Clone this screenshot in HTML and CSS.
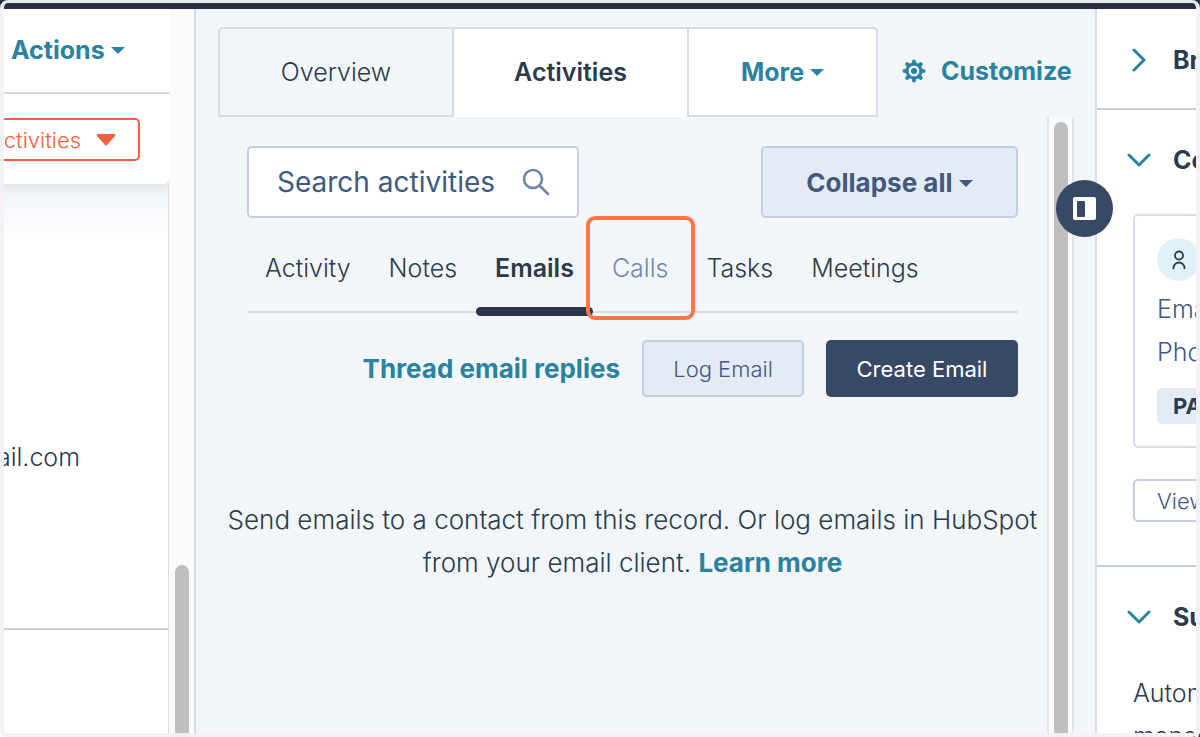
FILE: index.html
```html
<!DOCTYPE html>
<html lang="en">
<head>
<meta charset="utf-8">
<meta name="viewport" content="width=device-width, initial-scale=1">
<title>Contact record</title>
<link rel="stylesheet" href="styles.css">
</head>
<body>
<div class="page">
  <header class="topbar"></header>
  <div class="workspace">
    <aside class="left">
      <div class="left-body">
        <div class="left-head">
          <div class="actions-row"><button class="link-btn" type="button">Actions <span class="caret"></span></button></div>
          <div class="filter-row"><button class="filter-btn" type="button">activities
            <svg width="22" height="14" viewBox="0 0 22 14"><path d="M3 1h16q2 0 1 2l-8 9q-1 1-2 0L2 3q-1-2 1-2z" fill="#f2603f"/></svg></button></div>
        </div>
        <div class="contact"><span>gmail.com</span></div>
        <div class="left-rest"></div>
      </div>
      <div class="track left-track"><div class="thumb"></div></div>
    </aside>

    <main class="middle">
      <div class="tabs-row">
        <nav class="tabs">
          <button class="tab tab-muted" type="button">Overview</button>
          <button class="tab tab-active" type="button">Activities</button>
          <button class="tab tab-more" type="button">More <span class="caret"></span></button>
        </nav>
        <button class="link-btn customize" type="button">
          <svg width="24" height="24" viewBox="0 0 24 24" fill="none" stroke="#2a82a0"><circle cx="12" cy="12" r="7" stroke-width="3"/><circle cx="12" cy="12" r="3" fill="#2a82a0" stroke="none"/><path d="M12 2.500v2M12 19.500v2M2.500 12h2M19.500 12h2M5.200 5.200l1.500 1.500M17.300 17.300l1.500 1.500M5.200 18.800l1.500-1.500M17.300 6.700l1.500-1.500" stroke-width="4" stroke-linecap="round"/></svg>
          Customize</button>
      </div>
      <div class="scroller">
        <div class="content">
          <div class="tools">
            <label class="search">
              <input type="text" placeholder="Search activities" aria-label="Search activities">
              <svg width="28" height="28" viewBox="0 0 28 28" fill="none" stroke="#6a85ad" stroke-width="2.500" stroke-linecap="round"><circle cx="11" cy="11" r="9"/><path d="M18 18l8 8"/></svg>
            </label>
            <button class="btn btn-collapse" type="button">Collapse all <span class="caret"></span></button>
          </div>
          <nav class="subtabs">
            <a class="subtab" href="#">Activity</a>
            <a class="subtab" href="#">Notes</a>
            <a class="subtab subtab-current" href="#">Emails</a>
            <a class="subtab subtab-marked" href="#">Calls</a>
            <a class="subtab" href="#">Tasks</a>
            <a class="subtab" href="#">Meetings</a>
          </nav>
          <div class="mail-actions">
            <a class="link" href="#">Thread email replies</a>
            <button class="btn btn-log" type="button">Log Email</button>
            <button class="btn btn-create" type="button">Create Email</button>
          </div>
          <p class="empty">Send emails to a contact from this record. Or log emails in HubSpot from your email client. <a class="link" href="#">Learn more</a></p>
        </div>
        <div class="track mid-track"><div class="thumb"></div></div>
      </div>
    </main>

    <aside class="right">
      <section class="section">
        <button class="section-head" type="button"><svg width="24" height="24" viewBox="0 0 24 24"><path d="M7 2l10 10L7 22"/></svg>Breeze</button>
      </section>
      <section class="section section-contacts">
        <button class="section-head" type="button"><svg width="24" height="24" viewBox="0 0 24 24"><path d="M2 7l10 10L22 7"/></svg>Contacts</button>
        <div class="card">
          <div class="avatar"><svg width="14" height="20" viewBox="0 0 14 20" fill="none" stroke="#2b3a4c" stroke-width="1.800"><circle cx="7" cy="5.500" r="4"/><path d="M1.500 19v-1a5.500 5.500 0 0 1 11 0v1"/></svg></div>
          <div class="field">Email</div>
          <div class="field">Phone</div>
          <span class="tag">PAST</span>
        </div>
        <button class="view-btn" type="button">View</button>
      </section>
      <section class="section section-last">
        <button class="section-head" type="button"><svg width="24" height="24" viewBox="0 0 24 24"><path d="M2 7l10 10L22 7"/></svg>Summary</button>
        <p class="note">Automatic<br>manage</p>
      </section>
    </aside>
    <button class="panel-toggle" type="button" aria-label="Toggle side panel"><svg width="24" height="24" viewBox="0 0 24 24"><rect width="23" height="23" rx="2" fill="#fff"/><rect x="4" y="4" width="8" height="16" rx="1" fill="#384966"/></svg></button>
  </div>
  <div class="frame"></div>
</div>
</body>
</html>
```
FILE: styles.css
```css
* { box-sizing: border-box; }
body { margin: 0; font-family: Inter, "Liberation Sans", sans-serif; font-size: 25px; font-weight: 300; color: #2b3a4c; }
button, input { font: inherit; color: inherit; border: 0; background: none; padding: 0; margin: 0; }
button { white-space: nowrap; cursor: pointer; }
a { text-decoration: none; color: inherit; }
svg { flex: none; }

.page { position: relative; display: flex; flex-direction: column; height: 100vh; overflow: hidden; }
.topbar { flex: none; height: 9px; background: #253043; }
.workspace { position: relative; flex: 1; min-height: 0; display: grid; grid-template-columns: 196px 1fr 105px; }
.frame { position: absolute; inset: 0; border: 4px solid rgba(243, 241, 246, 0.95); border-top-width: 3px; border-radius: 8px; pointer-events: none; }
.caret { display: inline-block; border: 7px solid transparent; border-top: 7px solid currentColor; border-bottom: 0; }
.link-btn, .link { color: #2a82a0; font-weight: 700; }
.track { background: #fafafa; }
.thumb { width: 14px; height: 100%; background: #bfbfbf; border-radius: 7px 7px 0 0; }

.left { display: grid; grid-template-columns: 169px 1fr; overflow: hidden; border-right: 2px solid #d6dae4; background: #fff; }
.left-body { display: flex; flex-direction: column; min-width: 0; background: linear-gradient(#f0f4f8 180px, #fff 230px); }
.left-head { background: #fff; border-radius: 0 0 6px 0; box-shadow: 0 4px 10px rgba(60, 80, 110, 0.1); }
.actions-row { display: flex; align-items: center; height: 85px; padding: 0 0 2px 11px; border-bottom: 2px solid #d3d9e5; }
.actions-row .caret { vertical-align: 5px; }
.filter-row { display: flex; justify-content: flex-end; padding: 24px 29px 23px 0; }
.filter-btn { display: flex; align-items: center; gap: 14px; height: 43px; padding: 0 21px; border: 2px solid #f2603f; border-radius: 5px; font-size: 22px; color: #f2603f; }
.contact { display: flex; justify-content: flex-end; align-items: flex-end; height: 446px; padding: 0 88px 155px 0; border-right: 1px solid #dedfe2; border-bottom: 2px solid #c6cfdf; line-height: 32px; }
.left-rest { flex: 1; border-right: 1px solid #dedfe2; }
.left-track { padding: 556px 0 0 6px; }

.middle { display: flex; flex-direction: column; min-width: 0; padding: 18px 21px 0 22px; background: #f2f6f9; }
.tabs-row { display: flex; align-items: center; gap: 24px; }
.tabs { display: flex; height: 90px; }
.tab { border: 2px solid #d9dce8; background: #fff; }
.tab-muted { width: 236px; background: #f2f6f9; border-radius: 5px 0 0 0; }
.tab-active { width: 233px; border-width: 2px 0 0; padding-bottom: 2px; font-weight: 600; }
.tab-more { width: 191px; border-radius: 0 5px 0 0; font-weight: 700; color: #2a82a0; }
.tab-more .caret, .btn .caret { vertical-align: 5px; }
.customize { display: flex; align-items: center; gap: 15px; padding-bottom: 2px; }
.scroller { flex: 1; min-height: 0; display: flex; }
.content { flex: 1; min-width: 0; padding: 29px 29px 0; }
.mid-track { width: 27px; padding: 5px 0 0 5px; border: solid #e3e4e7; border-width: 0 2px; }
.tools { display: flex; justify-content: space-between; height: 72px; }
.search { display: flex; align-items: center; gap: 18px; width: 332px; padding: 0 27px 0 28px; border: 2px solid #c3cee0; border-radius: 5px; background: #fff; }
.search input { flex: 1; min-width: 0; outline: 0; font-size: 28px; font-weight: 400; }
.search input::placeholder { color: #42597f; opacity: 1; }
.btn { border-radius: 5px; font-size: 22px; color: #42597f; }
.btn-collapse { width: 257px; border: 2px solid #c3cee0; background: #e5ebf4; font-size: 26px; font-weight: 700; }
.subtabs { display: flex; height: 95px; border-bottom: 2px solid #d9dce8; }
.subtab { position: relative; padding: 0 19px; line-height: 101px; }
.subtab:first-child { padding-left: 18px; }
.subtab-current { font-weight: 600; }
.subtab-current::after { content: ""; position: absolute; left: 0; right: 0; bottom: -5px; height: 9px; border-radius: 5px; background: #2b3749; }
.subtab-marked { color: #7189b2; }
.subtab-marked::after { content: ""; position: absolute; z-index: 1; inset: -2px -8px -9px -7px; border: 4px solid #ff7547; border-radius: 9px; }
.mail-actions { display: flex; justify-content: flex-end; align-items: center; gap: 22px; margin-top: 27px; }
.mail-actions .link { font-size: 26px; }
.mail-actions .btn { height: 57px; }
.btn-log { width: 162px; border: 2px solid #c3cee0; background: #e5ebf4; }
.btn-create { width: 192px; background: #384966; color: #fff; font-weight: 400; }
.empty { margin: 101px -24px 0; text-align: center; font-size: 26px; line-height: 43px; }

.right { min-width: 0; overflow: hidden; border-left: 2px solid #d9dce8; background: #fff; color: #2b3a4c; }
.section { border-bottom: 2px solid #c3cee0; padding-left: 30px; }
.section-head { display: flex; align-items: center; gap: 22px; height: 99px; padding-top: 3px; font-weight: 700; }
.section-head svg { fill: none; stroke: #2a82a0; stroke-width: 3; stroke-linecap: round; stroke-linejoin: round; }
.section-contacts { padding-left: 36px; height: 457px; }
.section-contacts .section-head, .section-last .section-head { margin-left: -6px; padding-top: 0; }
.section-last { padding-left: 36px; border: 0; }
.card { width: 240px; height: 234px; margin-top: 5px; padding: 22px; border: 2px solid #d9dce8; border-radius: 5px; color: #42597f; }
.avatar { display: flex; align-items: center; justify-content: center; width: 43px; height: 43px; margin-bottom: 7px; border-radius: 50%; background: #e0f2f7; }
.field { line-height: 43px; }
.tag { display: inline-block; margin-top: 14px; padding: 0 16px; border-radius: 5px; background: #e5ebf4; color: #2b3a4c; font-size: 22px; font-weight: 700; line-height: 36px; }
.view-btn { display: block; width: 160px; height: 43px; margin-top: 31px; padding-left: 22px; border: 2px solid #c3cee0; border-radius: 5px; font-size: 22px; color: #42597f; text-align: left; }
.note { margin: 6px 0 0; line-height: 43px; }
.panel-toggle { position: absolute; top: 171px; right: 87px; display: flex; align-items: center; justify-content: center; width: 57px; height: 57px; border-radius: 50%; background: #384966; }
```
